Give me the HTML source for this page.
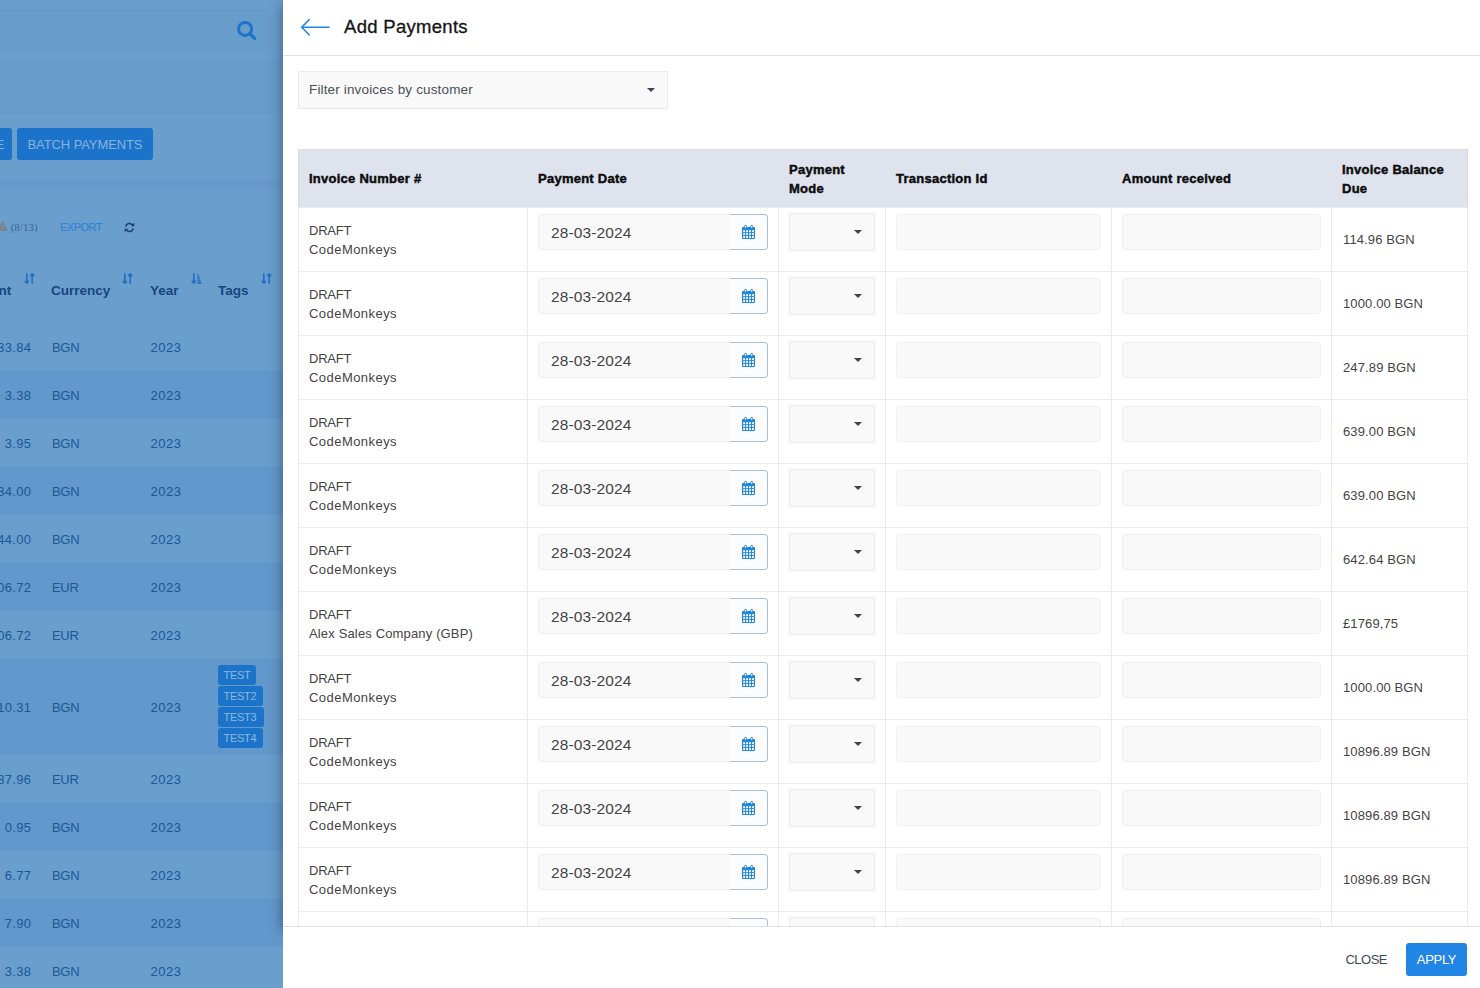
<!DOCTYPE html>
<html lang="en"><head><meta charset="utf-8"><title>Add Payments</title>
<style>
*{box-sizing:border-box}
html,body{margin:0;padding:0}
body{width:1480px;height:988px;overflow:hidden;position:relative;background:#6a9ecd;font-family:"Liberation Sans",sans-serif;font-size:13px;color:#444}
/* ---------- left dimmed page ---------- */
#left{position:absolute;left:0;top:0;width:283px;height:988px;overflow:hidden;background:#6a9ecd;color:#1f5c9c}
#left .band{position:absolute;left:0;width:283px}
#left .search{position:absolute;left:-20px;top:10px;width:290px;height:40px;border-radius:4px;background:#689ccb;border:1px solid #6699c9}
#left .btn{position:absolute;top:128px;height:32px;border-radius:3px;background:#1b74c9;color:#88b2de;font-size:13px;line-height:33px;text-align:center;letter-spacing:-.1px}
.lr{position:absolute;left:0;width:283px;font-size:13px;color:#1d5795}
.lr.dk{background:#6398cc}
.lr span{position:absolute;top:1px}
.lr .amt{right:252px;white-space:nowrap;text-align:right;letter-spacing:.3px;margin-right:-.3px}
.lr .cur{left:52px;letter-spacing:-.3px}
.lr .yr{left:150.500px;letter-spacing:.5px}
.tags{position:absolute;left:218px;top:6px;line-height:18px}
.tags span{top:auto}
.tags span{position:static;display:block;float:left;clear:left;height:20px;line-height:20px;margin:0 0 1px;padding:0 5px 0 5.500px;border-radius:3px;background:#1b74c9;color:#8fb8e2;font-size:11px;letter-spacing:-.3px}
.lh{position:absolute;top:283px;font-weight:bold;font-size:13.5px;color:#16467e}
/* ---------- right panel ---------- */
#panel{position:absolute;left:283px;top:0;width:1197px;height:988px;background:#fff}
#sh{position:absolute;left:283px;top:0;width:1197px;height:926px;box-shadow:0 5px 13px 0 rgba(10,25,45,.5)}
#ph{position:absolute;left:0;top:0;right:0;height:56px;border-bottom:1px solid #e2e2e2}
#ph .title{position:absolute;left:61px;top:14px;font-size:18.5px;line-height:26px;color:#141414;letter-spacing:.3px;-webkit-text-stroke:.3px #141414}
#filter{position:absolute;left:15px;top:71px;width:370px;height:38px;background:#f9f9f9;border:1px solid #ebebeb;font-size:13.5px;line-height:36px;padding-left:10px;color:#495057;letter-spacing:.15px}
.caret{position:absolute;width:0;height:0;border-left:4px solid transparent;border-right:4px solid transparent;border-top:4px solid #36475c}
#body{position:absolute;left:0;top:56px;right:0;height:870px;overflow:hidden}
table{position:absolute;left:15px;top:93px;width:1170px;border-collapse:separate;border-spacing:0;table-layout:fixed}
th{height:59px;background:#dfe3ee;text-align:left;font-size:13px;line-height:19px;color:#0c0c0c;padding:0 10px;font-weight:bold;-webkit-text-stroke:.45px #0c0c0c;border-top:1px solid #d9dbde;border-bottom:1px solid #e6edf8;letter-spacing:.25px}
th:first-child{border-left:1px solid #d9dbde}
th:last-child{border-right:1px solid #d9dbde}
td{height:64px;border-right:1px solid #eaebed;border-bottom:1px solid #eaebed;padding:0 10px;vertical-align:top;font-size:13px;line-height:19px;color:#444}
td:first-child{border-left:1px solid #eaebed}
td.c1{padding-top:13px}
.s0{letter-spacing:-.25px}.s1{letter-spacing:.45px}.s2{letter-spacing:.15px}
td.c6{padding-top:22px;padding-left:11px;letter-spacing:.12px}
td.c2,td.c3,td.c4,td.c5{padding-top:6px}
.dt{display:flex;height:36px}
.di{flex:1;background:#f9f9f9;border:1px solid #efefef;border-right:0;border-radius:4px 0 0 4px;font-size:15.5px;line-height:35px;padding-left:12px;color:#444;letter-spacing:.12px}
.db{position:relative;width:38px;background:#fcfdff;border:1px solid #aabdd6;border-left:0;border-radius:0 4px 4px 0}
.db svg{position:absolute;left:12px;top:10px}
.sel{position:relative;height:38px;margin-top:-1px;background:#f9f9f9;border:1px solid #ececec}
.sel .caret{left:64px;top:16px}
.inp{height:36px;background:#f9f9f9;border:1px solid #efefef;border-radius:4px}
#pf{position:absolute;left:0;bottom:0;right:0;height:62px;border-top:1px solid #e2e2e2;background:#fff}
#pf .close{position:absolute;right:93px;top:17px;font-size:13px;line-height:32px;color:#3f4a5a;letter-spacing:-.5px}
#pf .apply{position:absolute;right:13px;top:16px;width:61px;height:33px;border-radius:3px;background:#2185e5;color:#fff;font-size:13px;line-height:32px;text-align:center;letter-spacing:-.3px;line-height:34px}
</style></head>
<body>
<svg width="0" height="0" style="position:absolute"><symbol id="cal" viewBox="0 0 13 14"><path fill="#2185e5" d="M.9 2h11.200a.9.9 0 0 1 .9.9v10.200a.9.9 0 0 1-.9.9H.9a.9.9 0 0 1-.9-.9V2.900a.9.9 0 0 1 .9-.9z"/><rect x="2.3" y="0" width="2.6" height="4" rx="1.3" fill="#2185e5"/><rect x="3.15" y=".8" width=".9" height="2.500" rx=".45" fill="#fff"/><rect x="8.4" y="0" width="2.6" height="4" rx="1.3" fill="#2185e5"/><rect x="9.25" y=".8" width=".9" height="2.500" rx=".45" fill="#fff"/><rect x="1.2" y="5.2" width="1.85" height="2" fill="#fff"/><rect x="4.15" y="5.2" width="1.85" height="2" fill="#fff"/><rect x="7.1" y="5.2" width="1.85" height="2" fill="#fff"/><rect x="10.05" y="5.2" width="1.85" height="2" fill="#fff"/><rect x="1.2" y="8.1" width="1.85" height="2" fill="#fff"/><rect x="4.15" y="8.1" width="1.85" height="2" fill="#fff"/><rect x="7.1" y="8.1" width="1.85" height="2" fill="#fff"/><rect x="10.05" y="8.1" width="1.85" height="2" fill="#fff"/><rect x="1.2" y="11.0" width="1.85" height="2" fill="#fff"/><rect x="4.15" y="11.0" width="1.85" height="2" fill="#fff"/><rect x="7.1" y="11.0" width="1.85" height="2" fill="#fff"/><rect x="10.05" y="11.0" width="1.85" height="2" fill="#fff"/></symbol></svg>
<svg width="0" height="0" style="position:absolute"><symbol id="srt" viewBox="0 0 11 11"><path d="M2.800.3V10M.8 7.900L2.800 10.200L4.800 7.900M8.200 10.700V1M6.200 3.100L8.200.8L10.200 3.100" fill="none" stroke="#2670c2" stroke-width="1.700"/></symbol><symbol id="srt2" viewBox="0 0 11 11"><path d="M2.800.3V10M.8 7.900L2.800 10.200L4.800 7.900" fill="none" stroke="#2670c2" stroke-width="1.700"/><path d="M6.300 1h1.500v2.200H6.300zM6.300 3.800h2.500v2H6.300zM6.300 6.400h3.300v2H6.300zM6.300 9h4.200v1.700H6.300z" fill="#2670c2"/></symbol></svg>
<div id="left">
  <div class="search"></div>
  <svg style="position:absolute;left:236px;top:20px" width="22" height="22" viewBox="0 0 22 22"><circle cx="9.100" cy="8.900" r="6.500" fill="none" stroke="#1b74c9" stroke-width="3"/><path d="M13.800 13.600L18.800 18.600" stroke="#1b74c9" stroke-width="3" stroke-linecap="round"/></svg>
  <div class="band" style="top:60px;height:53px;background:#689ccb;border-top:1px solid #6699c9;border-bottom:1px solid #6699c9"></div>
  <div class="band" style="top:113px;height:68px;background:#6a9ecd"></div>
  <div class="band" style="top:181px;height:10px;background:linear-gradient(#6699c9,#689ccb)"></div>
  <div class="btn" style="left:-30px;width:42px;text-align:right;padding-right:8px">E</div>
  <div class="btn" style="left:17px;width:136px">BATCH PAYMENTS</div>
  <div style="position:absolute;left:10.700px;top:219px;font-family:'Liberation Serif',serif;font-size:11px;line-height:16px;color:#3d6490">(8/13)</div>
  <svg style="position:absolute;left:-3px;top:221px" width="11" height="10" viewBox="0 0 11 10"><path d="M5.5 0L11 10H0Z" fill="#7b8487"/><rect x="4.9" y="3.5" width="1.2" height="3.5" fill="#6b9fcf"/><rect x="4.9" y="7.7" width="1.2" height="1.2" fill="#6b9fcf"/></svg>
  <div style="position:absolute;left:60px;top:219px;font-size:11px;line-height:16px;color:#2a7fd6;letter-spacing:-.5px">EXPORT</div>
  <svg style="position:absolute;left:124px;top:222px" width="11" height="11" viewBox="0 0 11 11"><path d="M1.6 4.6A4 4 0 0 1 8.6 2.9M9.4 6.400A4 4 0 0 1 2.400 8.100" fill="none" stroke="#163f6e" stroke-width="1.5"/><path d="M10.300.8V4.200H6.900Z M.7 10.200V6.800H4.100Z" fill="#163f6e"/></svg>
  <div class="lh" style="left:-1.500px">nt</div>
  <div class="lh" style="left:51px">Currency</div>
  <div class="lh" style="left:150px">Year</div>
  <div class="lh" style="left:218px">Tags</div>
  <svg class="srt" style="position:absolute;left:24px;top:273px" width="11" height="11" viewBox="0 0 11 11"><use href="#srt"/></svg>
  <svg class="srt" style="position:absolute;left:122px;top:273px" width="11" height="11" viewBox="0 0 11 11"><use href="#srt"/></svg>
  <svg class="srt" style="position:absolute;left:190.500px;top:273px" width="11" height="11" viewBox="0 0 11 11"><use href="#srt2"/></svg>
  <svg class="srt" style="position:absolute;left:260.500px;top:273px" width="11" height="11" viewBox="0 0 11 11"><use href="#srt"/></svg>
<div class="lr" style="top:323px;height:48px;line-height:48px"><span class="amt">33.84</span><span class="cur">BGN</span><span class="yr">2023</span></div>
<div class="lr dk" style="top:371px;height:48px;line-height:48px"><span class="amt">3.38</span><span class="cur">BGN</span><span class="yr">2023</span></div>
<div class="lr" style="top:419px;height:48px;line-height:48px"><span class="amt">3.95</span><span class="cur">BGN</span><span class="yr">2023</span></div>
<div class="lr dk" style="top:467px;height:48px;line-height:48px"><span class="amt">34.00</span><span class="cur">BGN</span><span class="yr">2023</span></div>
<div class="lr" style="top:515px;height:48px;line-height:48px"><span class="amt">44.00</span><span class="cur">BGN</span><span class="yr">2023</span></div>
<div class="lr dk" style="top:563px;height:48px;line-height:48px"><span class="amt">06.72</span><span class="cur">EUR</span><span class="yr">2023</span></div>
<div class="lr" style="top:611px;height:48px;line-height:48px"><span class="amt">06.72</span><span class="cur">EUR</span><span class="yr">2023</span></div>
<div class="lr dk" style="top:659px;height:96px;line-height:96px"><span class="amt">10.31</span><span class="cur">BGN</span><span class="yr">2023</span><div class="tags"><span style="width:38px">TEST</span><span style="width:45px">TEST2</span><span style="width:46px">TEST3</span><span style="width:45px">TEST4</span></div></div>
<div class="lr" style="top:755px;height:48px;line-height:48px"><span class="amt">87.96</span><span class="cur">EUR</span><span class="yr">2023</span></div>
<div class="lr dk" style="top:803px;height:48px;line-height:48px"><span class="amt">0.95</span><span class="cur">BGN</span><span class="yr">2023</span></div>
<div class="lr" style="top:851px;height:48px;line-height:48px"><span class="amt">6.77</span><span class="cur">BGN</span><span class="yr">2023</span></div>
<div class="lr dk" style="top:899px;height:48px;line-height:48px"><span class="amt">7.90</span><span class="cur">BGN</span><span class="yr">2023</span></div>
<div class="lr" style="top:947px;height:48px;line-height:48px"><span class="amt">3.38</span><span class="cur">BGN</span><span class="yr">2023</span></div>
</div>
<div id="sh"></div>
<div id="panel">
  <div id="ph">
    <svg style="position:absolute;left:16px;top:17px" width="32" height="20" viewBox="0 0 32 20"><path d="M10.700 2.200L2.700 10.200L10.700 18.200M2.700 10.200H30.600" fill="none" stroke="#2185e5" stroke-width="1.600" stroke-linejoin="miter"/></svg>
    <div class="title">Add Payments</div>
  </div>
  <div id="body">
    <div id="filter" style="top:15px">Filter invoices by customer<i class="caret" style="left:347.500px;top:16.300px"></i></div>
    <table>
      <colgroup><col style="width:230px"><col style="width:251px"><col style="width:107px"><col style="width:226px"><col style="width:220px"><col style="width:136px"></colgroup>
      <thead><tr><th>Invoice Number #</th><th>Payment Date</th><th>Payment<br>Mode</th><th>Transaction Id</th><th>Amount received</th><th>Invoice Balance<br>Due</th></tr></thead>
      <tbody>
<tr><td class="c1"><span class="s0">DRAFT</span><br><span class="s1">CodeMonkeys</span></td><td class="c2"><div class="dt"><span class="di">28-03-2024</span><span class="db"><svg class="cal" width="13" height="14"><use href="#cal"/></svg></span></div></td><td class="c3"><div class="sel"><i class="caret"></i></div></td><td class="c4"><div class="inp"></div></td><td class="c5"><div class="inp"></div></td><td class="c6">114.96 BGN</td></tr>
<tr><td class="c1"><span class="s0">DRAFT</span><br><span class="s1">CodeMonkeys</span></td><td class="c2"><div class="dt"><span class="di">28-03-2024</span><span class="db"><svg class="cal" width="13" height="14"><use href="#cal"/></svg></span></div></td><td class="c3"><div class="sel"><i class="caret"></i></div></td><td class="c4"><div class="inp"></div></td><td class="c5"><div class="inp"></div></td><td class="c6">1000.00 BGN</td></tr>
<tr><td class="c1"><span class="s0">DRAFT</span><br><span class="s1">CodeMonkeys</span></td><td class="c2"><div class="dt"><span class="di">28-03-2024</span><span class="db"><svg class="cal" width="13" height="14"><use href="#cal"/></svg></span></div></td><td class="c3"><div class="sel"><i class="caret"></i></div></td><td class="c4"><div class="inp"></div></td><td class="c5"><div class="inp"></div></td><td class="c6">247.89 BGN</td></tr>
<tr><td class="c1"><span class="s0">DRAFT</span><br><span class="s1">CodeMonkeys</span></td><td class="c2"><div class="dt"><span class="di">28-03-2024</span><span class="db"><svg class="cal" width="13" height="14"><use href="#cal"/></svg></span></div></td><td class="c3"><div class="sel"><i class="caret"></i></div></td><td class="c4"><div class="inp"></div></td><td class="c5"><div class="inp"></div></td><td class="c6">639.00 BGN</td></tr>
<tr><td class="c1"><span class="s0">DRAFT</span><br><span class="s1">CodeMonkeys</span></td><td class="c2"><div class="dt"><span class="di">28-03-2024</span><span class="db"><svg class="cal" width="13" height="14"><use href="#cal"/></svg></span></div></td><td class="c3"><div class="sel"><i class="caret"></i></div></td><td class="c4"><div class="inp"></div></td><td class="c5"><div class="inp"></div></td><td class="c6">639.00 BGN</td></tr>
<tr><td class="c1"><span class="s0">DRAFT</span><br><span class="s1">CodeMonkeys</span></td><td class="c2"><div class="dt"><span class="di">28-03-2024</span><span class="db"><svg class="cal" width="13" height="14"><use href="#cal"/></svg></span></div></td><td class="c3"><div class="sel"><i class="caret"></i></div></td><td class="c4"><div class="inp"></div></td><td class="c5"><div class="inp"></div></td><td class="c6">642.64 BGN</td></tr>
<tr><td class="c1"><span class="s0">DRAFT</span><br><span class="s2">Alex Sales Company (GBP)</span></td><td class="c2"><div class="dt"><span class="di">28-03-2024</span><span class="db"><svg class="cal" width="13" height="14"><use href="#cal"/></svg></span></div></td><td class="c3"><div class="sel"><i class="caret"></i></div></td><td class="c4"><div class="inp"></div></td><td class="c5"><div class="inp"></div></td><td class="c6">£1769,75</td></tr>
<tr><td class="c1"><span class="s0">DRAFT</span><br><span class="s1">CodeMonkeys</span></td><td class="c2"><div class="dt"><span class="di">28-03-2024</span><span class="db"><svg class="cal" width="13" height="14"><use href="#cal"/></svg></span></div></td><td class="c3"><div class="sel"><i class="caret"></i></div></td><td class="c4"><div class="inp"></div></td><td class="c5"><div class="inp"></div></td><td class="c6">1000.00 BGN</td></tr>
<tr><td class="c1"><span class="s0">DRAFT</span><br><span class="s1">CodeMonkeys</span></td><td class="c2"><div class="dt"><span class="di">28-03-2024</span><span class="db"><svg class="cal" width="13" height="14"><use href="#cal"/></svg></span></div></td><td class="c3"><div class="sel"><i class="caret"></i></div></td><td class="c4"><div class="inp"></div></td><td class="c5"><div class="inp"></div></td><td class="c6">10896.89 BGN</td></tr>
<tr><td class="c1"><span class="s0">DRAFT</span><br><span class="s1">CodeMonkeys</span></td><td class="c2"><div class="dt"><span class="di">28-03-2024</span><span class="db"><svg class="cal" width="13" height="14"><use href="#cal"/></svg></span></div></td><td class="c3"><div class="sel"><i class="caret"></i></div></td><td class="c4"><div class="inp"></div></td><td class="c5"><div class="inp"></div></td><td class="c6">10896.89 BGN</td></tr>
<tr><td class="c1"><span class="s0">DRAFT</span><br><span class="s1">CodeMonkeys</span></td><td class="c2"><div class="dt"><span class="di">28-03-2024</span><span class="db"><svg class="cal" width="13" height="14"><use href="#cal"/></svg></span></div></td><td class="c3"><div class="sel"><i class="caret"></i></div></td><td class="c4"><div class="inp"></div></td><td class="c5"><div class="inp"></div></td><td class="c6">10896.89 BGN</td></tr>
<tr><td class="c1"><span class="s0">DRAFT</span><br><span class="s1">CodeMonkeys</span></td><td class="c2"><div class="dt"><span class="di">28-03-2024</span><span class="db"><svg class="cal" width="13" height="14"><use href="#cal"/></svg></span></div></td><td class="c3"><div class="sel"><i class="caret"></i></div></td><td class="c4"><div class="inp"></div></td><td class="c5"><div class="inp"></div></td><td class="c6">10896.89 BGN</td></tr>
      </tbody>
    </table>
  </div>
  <div id="pf"><div class="close">CLOSE</div><div class="apply">APPLY</div></div>
</div>
</body></html>
